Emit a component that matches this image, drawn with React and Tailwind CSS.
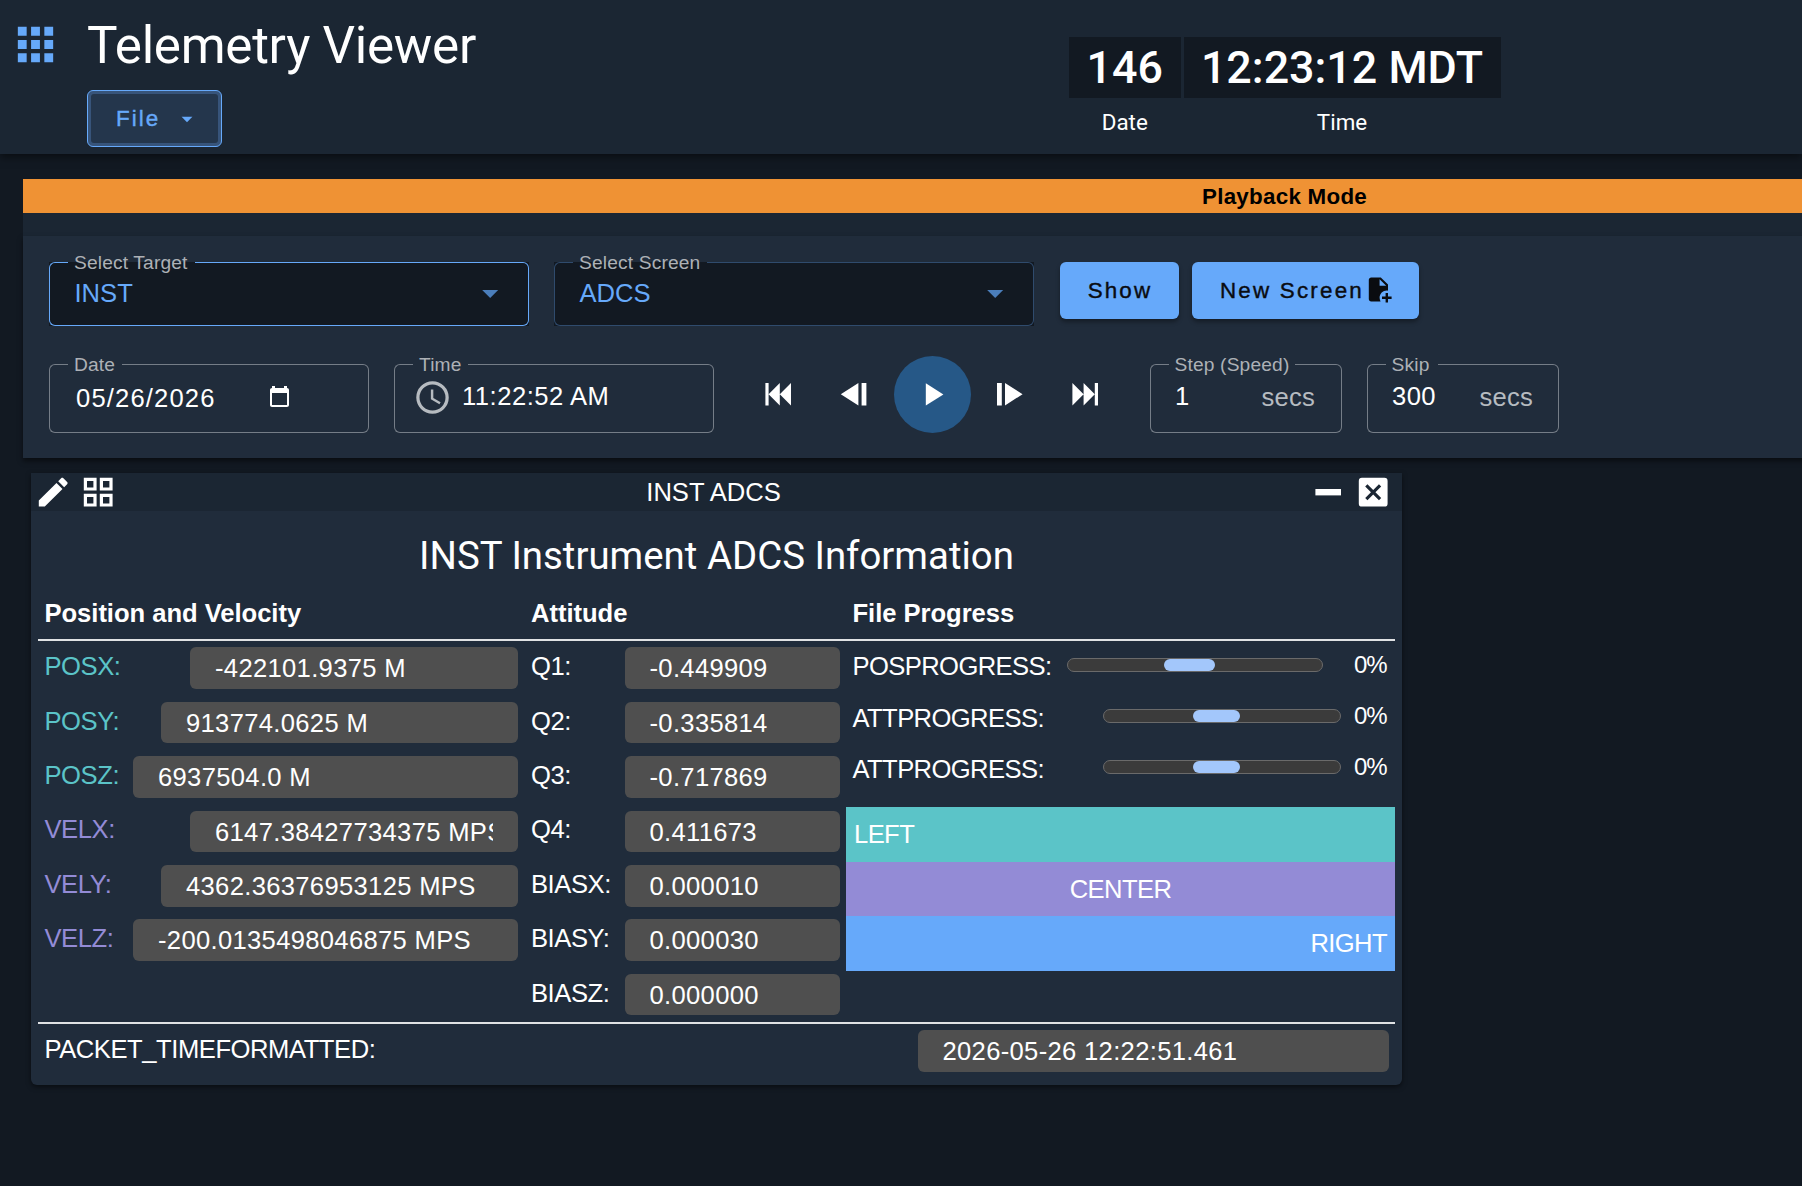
import React from 'react';
import clsx from 'clsx';

const icons = {
  apps: 'M16,20H20V16H16M16,14H20V10H16M10,8H14V4H10M16,8H20V4H16M10,14H14V10H10M4,14H8V10H4M4,20H8V16H4M10,20H14V16H10M4,8H8V4H4V8Z',
  menuDown: 'M7,10L12,15L17,10H7Z',
  skipBackward: 'M20,5V19L13,12M6,5V19H4V5M13,5V19L6,12',
  stepBackward: 'M19,5V19H16V5M14,5V19L3,12',
  play: 'M8,5.14V19.14L19,12.14V12.14Z',
  stepForward: 'M5,5V19H8V5M10,5V19L21,12',
  skipForward: 'M4,5V19L11,12M18,5V19H20V5M11,5V19L18,12',
  clock: 'M12,20A8,8 0 0,0 20,12A8,8 0 0,0 12,4A8,8 0 0,0 4,12A8,8 0 0,0 12,20M12,2A10,10 0 0,1 22,12A10,10 0 0,1 12,22C6.47,22 2,17.5 2,12A10,10 0 0,1 12,2M12.5,7V12.25L17,14.92L16.25,16.15L11,13V7H12.5Z',
  pencil: 'M20.71,7.04C21.1,6.65 21.1,6 20.71,5.63L18.37,3.29C18,2.9 17.35,2.9 16.96,3.29L15.12,5.12L18.87,8.87M3,17.25V21H6.75L17.81,9.93L14.06,6.18L3,17.25Z',
  grid: 'M3 11H11V3H3M5 5H9V9H5M13 21H21V13H13M15 15H19V19H15M3 21H11V13H3M5 15H9V19H5M13 3V11H21V3M19 9H15V5H19Z',
  minimize: 'M20,14H4V10H20',
  closeBox: 'M19,3H5A2,2 0 0,0 3,5V19A2,2 0 0,0 5,21H19A2,2 0 0,0 21,19V5A2,2 0 0,0 19,3M15.6,17L12,13.4L8.4,17L7,15.6L10.6,12L7,8.4L8.4,7L12,10.6L15.6,7L17,8.4L13.4,12L17,15.6L15.6,17Z',
  filePlus: 'M14 2H6C4.89 2 4 2.89 4 4V20C4 21.11 4.89 22 6 22H13.81C13.28 21.09 13 20.05 13 19C13 15.69 15.69 13 19 13C19.34 13 19.67 13.03 20 13.08V8L14 2M13 9V3.5L18.5 9H13M23 20H20V23H18V20H15V18H18V15H20V18H23V20Z',
  calendar: 'M5 0V2H14V0H17V2C18.1 2 19 2.9 19 4V19C19 20.1 18.1 21 17 21H2C.9 21 0 20.1 0 19V4C0 2.9 .9 2 2 2V0H5M2 7V19H17V7H2Z',
};

const Icon = ({ name, className = 'size-[38.4px]', viewBox = '0 0 24 24' }) => (
  <svg viewBox={viewBox} className={clsx('shrink-0', className)} fill="currentColor" fillRule="evenodd">
    <path d={icons[name]} />
  </svg>
);

// Outlined input: the label sits in a gap of the top border
const Field = ({ label, gap, border, className, children }) => (
  <div className={clsx('relative flex items-center', className)}>
    <div className="absolute inset-0 flex">
      <div className={clsx('w-[19px] rounded-l-[6px] border border-r-0', border)} />
      <div className={clsx('relative border-b', gap, border)}>
        <span className="absolute -top-[11px] left-[6px] text-[19.2px] leading-[24px] tracking-[0.15px] whitespace-nowrap text-[#adb1b6]">
          {label}
        </span>
      </div>
      <div className={clsx('flex-1 rounded-r-[6px] border border-l-0', border)} />
    </div>
    {children}
  </div>
);

const SelectField = ({ label, gap, border, value }) => (
  <Field label={label} gap={gap} border={border} className="h-16 w-[480px] bg-[#121922]">
    <span className="mb-[2px] flex-1 pl-[25.5px] text-[25.6px] leading-[30px] text-[#66a9fa]">{value}</span>
    <Icon name="menuDown" className="mr-[19.5px] mb-[2px] size-[38.4px] text-[#4b7ebb]" />
  </Field>
);

const Value = ({ value, className }) => (
  <div className={clsx('h-[41.6px] shrink-0 rounded-[6px] bg-[#4f4f4f] px-[25px]', className)}>
    <div className="overflow-hidden text-[25.6px] leading-[42px] tracking-[0.32px] whitespace-nowrap">{value}</div>
  </div>
);

const Row = ({ label, value, color, width }) => (
  <div className="flex h-[54.4px] items-center justify-between px-[6.5px]">
    <span className={clsx('-mt-[3.4px] tracking-[-0.45px]', color)}>{label}</span>
    <Value value={value} className={width} />
  </div>
);

const Progress = ({ label, bar, chunk }) => (
  <div className="flex h-[51.2px] items-center pr-[8px] pl-[6.5px]">
    <span className="flex-1 tracking-[-0.6px]">{label}</span>
    <div className={clsx('mb-1 flex h-[14px] rounded-full border border-[#6a6a6a] bg-[#3b3b3b]', bar)}>
      <div className={clsx('h-3 rounded-[6px] bg-[#a3c7fb]', chunk)} />
    </div>
    <span className="-mt-[3px] w-[33px] shrink-0 text-[24px] tracking-[-1px] whitespace-nowrap">0%</span>
  </div>
);

const position = [
  { label: 'POSX:', value: '-422101.9375 M', color: 'text-[#5bc4c8]', width: 'w-[328px]' },
  { label: 'POSY:', value: '913774.0625 M', color: 'text-[#5bc4c8]', width: 'w-[357px]' },
  { label: 'POSZ:', value: '6937504.0 M', color: 'text-[#5bc4c8]', width: 'w-[385px]' },
  { label: 'VELX:', value: '6147.38427734375 MPS', color: 'text-[#938bd6]', width: 'w-[328px]' },
  { label: 'VELY:', value: '4362.36376953125 MPS', color: 'text-[#938bd6]', width: 'w-[357px]' },
  { label: 'VELZ:', value: '-200.0135498046875 MPS', color: 'text-[#938bd6]', width: 'w-[385px]' },
];

const attitude = [
  ['Q1:', '-0.449909'],
  ['Q2:', '-0.335814'],
  ['Q3:', '-0.717869'],
  ['Q4:', '0.411673'],
  ['BIASX:', '0.000010'],
  ['BIASY:', '0.000030'],
  ['BIASZ:', '0.000000'],
];

const Header = () => (
  <header className="relative z-10 flex h-[154px] bg-[#1b2633] shadow-[0_3px_8px_rgba(0,0,0,0.5)]">
    <div className="w-[87px] pt-[18px] pl-[9px]">
      <Icon name="apps" className="size-[53px] text-[#66a9fa]" />
    </div>
    <div className="w-[982px]">
      <h1 className="mt-[16px] h-[60px] font-['Roboto'] text-[51.2px] leading-[60px] tracking-[-0.28px] whitespace-nowrap">
        Telemetry Viewer
      </h1>
      <button className="mt-[14px] flex h-[57px] w-[135px] items-center rounded-[6px] border border-[#66a9fa] bg-[#37547a] p-[3px] text-[#66a9fa]">
        <span className="flex h-full w-full items-center rounded-[3px] bg-[#24364c] pl-[25px] text-[22.4px] tracking-[2px] [-webkit-text-stroke:0.4px]">
          File
          <Icon name="menuDown" className="ml-[14px] size-[26px]" />
        </span>
      </button>
    </div>
    <div className="flex gap-[3px] pt-[36.5px] text-center font-['Roboto'] text-[22.4px]">
      <div className="w-[111.5px]">
        <div className="h-[61px] bg-[#121922] text-[44.8px] leading-[61.5px] font-medium">146</div>
        <div className="leading-[49px]">Date</div>
      </div>
      <div className="w-[317px]">
        <div className="h-[61px] bg-[#121922] text-[44.8px] leading-[61.5px] font-medium">12:23:12 MDT</div>
        <div className="leading-[49px]">Time</div>
      </div>
    </div>
  </header>
);

const Controls = () => (
  <section className="h-[222px] bg-[#202c3b] px-[26px] pt-[26px] shadow-[0_3px_5px_rgba(0,0,0,0.5)]">
    <div className="flex items-start">
      <SelectField label="Select Target" gap="w-[127px]" border="border-[#66a9fa]" value="INST" />
      <div className="w-[25px]" />
      <SelectField label="Select Screen" gap="w-[134px]" border="border-[#2f4b6d]" value="ADCS" />
      <button className="ml-[26px] h-[57px] w-[119px] rounded-[6px] bg-[#66a9fa] pl-[1px] text-[22.4px] tracking-[2.1px] text-[#0a0c10] shadow-[0_3px_4px_rgba(0,0,0,0.35)] [-webkit-text-stroke:0.4px]">
        Show
      </button>
      <button className="ml-[13px] flex h-[57px] w-[227px] items-center rounded-[6px] bg-[#66a9fa] pl-[28px] text-[22.4px] tracking-[2.2px] whitespace-nowrap text-[#0a0c10] shadow-[0_3px_4px_rgba(0,0,0,0.35)] [-webkit-text-stroke:0.4px]">
        New Screen
        <Icon name="filePlus" className="mb-[2px] size-[28.8px]" />
      </button>
    </div>

    <div className="mt-[30px] flex h-[77px] items-end text-[25.6px]">
      <Field label="Date" gap="w-[54px]" border="border-[#757d87]" className="h-[69px] w-[320px]">
        <span className="w-[194px] pl-[27px] tracking-[1.15px]">05/26/2026</span>
        <Icon name="calendar" viewBox="0 0 19 21" className="mb-1 ml-[27px] h-[21px] w-[19px]" />
      </Field>
      <Field label="Time" gap="w-[55px]" border="border-[#757d87]" className="ml-[25px] h-[69px] w-[320px]">
        <Icon name="clock" className="mb-[2px] ml-[19px] size-[39px] text-[#b6bbc0]" />
        <span className="mb-[4px] ml-[10px] tracking-[0.5px] whitespace-nowrap">11:22:52 AM</span>
      </Field>
      <div className="flex h-[77px] items-center pl-[45px]">
        <Icon name="skipBackward" />
        <Icon name="stepBackward" className="ml-[38.5px] size-[38.4px]" />
        <div className="ml-[19.5px] flex size-[77px] items-center justify-center rounded-full bg-[#265887]">
          <Icon name="play" />
        </div>
        <Icon name="stepForward" className="ml-[18.5px] size-[38.4px]" />
        <Icon name="skipForward" className="ml-[38.5px] size-[38.4px]" />
      </div>
      <Field label="Step (Speed)" gap="w-[126px]" border="border-[#757d87]" className="ml-[45px] h-[69px] w-[192px]">
        <span className="mb-[4px] w-[112px] pl-[25.5px]">1</span>
        <span className="mb-[3px] tracking-[0.2px] text-[#b6bbc0]">secs</span>
      </Field>
      <Field label="Skip" gap="w-[52px]" border="border-[#757d87]" className="ml-[25px] h-[69px] w-[192px]">
        <span className="mb-[4px] w-[113px] pl-[25.5px] tracking-[0.4px]">300</span>
        <span className="mb-[3px] tracking-[0.2px] text-[#b6bbc0]">secs</span>
      </Field>
    </div>
  </section>
);

const Heading = ({ children }) => (
  <div className="h-[58px] border-b-2 border-[#e0e2e4] pt-[14px] pl-[6.5px] leading-[32px] font-bold tracking-[-0.04px]">{children}</div>
);

const Screen = () => (
  <section className="mt-[15px] ml-[31px] h-[612px] w-[1371px] rounded-b-[6px] bg-[#202c3b] text-[25.6px] shadow-[0_2px_5px_rgba(0,0,0,0.5)]">
    <div className="flex h-[38px] items-center bg-[#1b2633] pr-[10px] pl-[3.4px]">
      <div className="flex w-[83.6px] gap-[6.4px]">
        <Icon name="pencil" />
        <Icon name="grid" />
      </div>
      <div className="flex-1 text-center leading-[38px]">
        <span>INST ADCS</span>
      </div>
      <div className="flex gap-[6px]">
        <Icon name="minimize" />
        <Icon name="closeBox" />
      </div>
    </div>

    <div className="px-[7px]">
      <h2 className="h-[72px] pt-[23px] text-center font-['Roboto'] text-[38.4px] leading-[44px]">INST Instrument ADCS Information</h2>
      <div className="grid h-[439px] grid-cols-[486.5px_321.5px_549px]">
        <div>
          <Heading>Position and Velocity</Heading>
          {position.map((item) => (
            <Row key={item.label} {...item} />
          ))}
        </div>
        <div>
          <Heading>Attitude</Heading>
          {attitude.map(([label, value]) => (
            <Row key={label} label={label} value={value} width="w-[215px]" />
          ))}
        </div>
        <div>
          <Heading>File Progress</Heading>
          <Progress label="POSPROGRESS:" bar="mr-[31px] w-[256px] pl-[96px]" chunk="w-[51px]" />
          <Progress label="ATTPROGRESS:" bar="mr-[13px] w-[238px] pl-[89px]" chunk="w-[47px]" />
          <Progress label="ATTPROGRESS:" bar="mr-[13px] w-[238px] pl-[89px]" chunk="w-[47px]" />
          <div className="mt-[12.4px] leading-[54.7px] tracking-[-0.6px]">
            <div className="bg-[#5bc4c8] px-2">LEFT</div>
            <div className="bg-[#938bd6] px-2 text-center">CENTER</div>
            <div className="bg-[#66a9fa] px-2 text-right">RIGHT</div>
          </div>
        </div>
      </div>
      <div className="border-t-2 border-[#e0e2e4]">
        <Row label="PACKET_TIMEFORMATTED:" value="2026-05-26 12:22:51.461" width="w-[471px]" />
      </div>
    </div>
  </section>
);

const App = () => {
  return (
    <div className="h-[1186px] w-[1802px] overflow-hidden bg-[#121922] font-['Liberation_Sans',sans-serif] text-white">
      <Header />
      <main className="pt-[25px]">
        {/* the toolbar is wider than the window and is clipped on the right */}
        <div className="ml-[23px] w-[2523px]">
          <div className="h-[34px] bg-[#ef9234] text-center text-[22.4px] leading-[35px] font-bold tracking-[0.25px] text-black">
            Playback Mode
          </div>
          <div className="h-[23px] bg-[#1b2633]" />
          <Controls />
        </div>
        <Screen />
      </main>
    </div>
  );
};

export default App;
